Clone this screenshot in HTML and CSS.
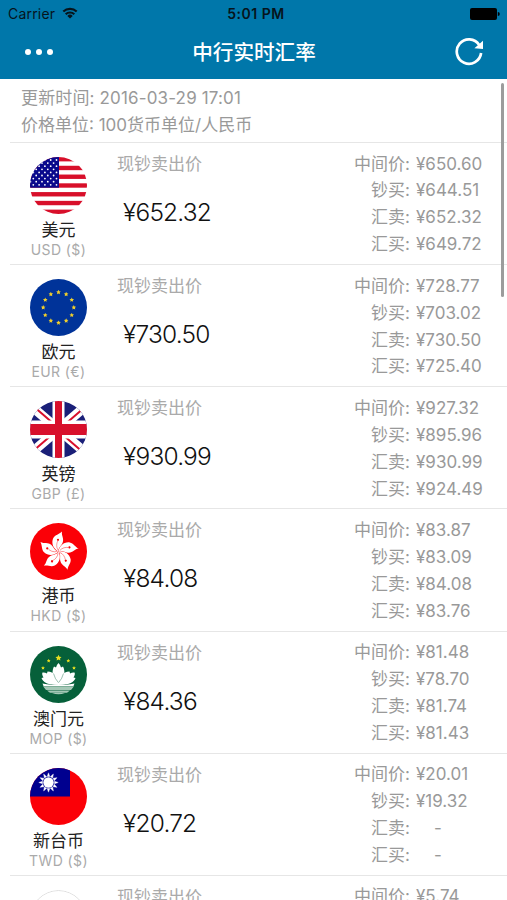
FILE: index.html
```
<!DOCTYPE html>
<html lang="zh-CN">
  <head>
    <meta charset="UTF-8" />
    <title>中行实时汇率</title>
    <link rel="stylesheet" href="styles.css">
  </head>
  <body>
    <div class="header">
      <!-- 状态栏 -->
      <div class="status-bar">
        <div class="carrier">
          Carrier
          <svg class="wifi" viewBox="0 0 16 12">
            <path d="M1.3 4.6a9.6 9.6 0 0 1 13.4 0M3.7 7.2a6.1 6.1 0 0 1 8.6 0" />
            <path class="wifi-dot" d="M8 11.6L5.3 8.9a3.9 3.9 0 0 1 5.4 0z" />
          </svg>
        </div>
        <div class="clock">5:01 PM</div>
        <svg class="battery" viewBox="0 0 30 12">
          <rect width="27" height="12" rx="2" />
          <path d="M27.8 4v4a2 2 0 0 0 0-4z" />
        </svg>
      </div>

      <!-- 导航栏 -->
      <div class="navbar">
        <div class="menu"><i></i><i></i><i></i></div>
        <h1>中行实时汇率</h1>
        <svg class="refresh" viewBox="0 0 28 28">
          <path class="refresh-arc" d="M26.1 15A12.2 12.2 0 1 1 24.2 6.9" />
          <path class="refresh-arrow" d="M28 2.7V11.1L19.4 10.2z" />
        </svg>
      </div>
    </div>

    <div class="scrollbar"></div>

    <div class="info">
      <div class="update-time">更新时间: 2016-03-29 17:01</div>
      <div>价格单位: 100货币单位/人民币</div>
    </div>

    <div class="rate-list"></div>

    <script src="app.js"></script>
  </body>
</html>
```

FILE: styles.css
```
* {
  margin: 0;
  padding: 0;
  box-sizing: border-box;
}

body {
  height: 900px;
  overflow: hidden;
  font-family: Inter, "Noto Sans CJK SC", sans-serif;
  background-color: #fff;
  color: #999;
}

.header {
  height: 79px;
  background-color: #0077aa;
}

/* 状态栏 */
.status-bar {
  display: grid;
  grid-template-columns: 1fr auto 1fr;
  align-items: center;
  height: 27px;
  padding: 0 7px 0 8px;
  color: #06141c;
}

.carrier {
  display: flex;
  align-items: center;
  gap: 7px;
  font-size: 14px;
  letter-spacing: 0.2px;
}

.wifi {
  width: 16px;
  height: 12px;
  margin-top: -2px;
  fill: none;
  stroke: #06141c;
  stroke-width: 2.1;
}

.wifi-dot {
  fill: #06141c;
  stroke: none;
}

.clock {
  padding-left: 4px;
  font-size: 14px;
  font-weight: 600;
  letter-spacing: 0.5px;
}

.battery {
  justify-self: end;
  width: 30px;
  height: 12px;
  fill: #000;
}

/* 导航栏 */
.navbar {
  display: grid;
  grid-template-columns: 1fr auto 1fr;
  align-items: center;
  height: 49px;
  padding: 0 24px 0 25px;
  color: #fff;
}

.menu {
  display: flex;
  gap: 5px;
}

.menu i {
  width: 6px;
  height: 6px;
  border-radius: 50%;
  background-color: #fff;
}

.navbar h1 {
  padding-top: 2px;
  font-size: 20.6px;
  font-weight: 500;
  line-height: 30px;
}

.refresh {
  justify-self: end;
  width: 28px;
  height: 28px;
}

.refresh-arc {
  fill: none;
  stroke: #fff;
  stroke-width: 2.7;
}

.refresh-arrow {
  fill: #fff;
}

.scrollbar {
  position: absolute;
  top: 83px;
  right: 3px;
  width: 3px;
  height: 214px;
  border-radius: 2px;
  background-color: #9c9c9c;
}

.info {
  height: 63px;
  padding: 6px 0 0 21px;
  font-size: 17px;
  line-height: 27px;
}

.update-time {
  letter-spacing: 0.15px;
}

/* 每一行货币 */
.rate {
  display: flex;
  height: 122.15px;
  margin-left: 10px;
  border-top: 1px solid #e6e6e6;
}

.currency {
  width: 97px;
  padding-top: 14px;
  text-align: center;
}

.flag {
  display: block;
  width: 57px;
  height: 57px;
  margin: 0 auto;
  border-radius: 50%;
}

.name {
  margin-top: 4px;
  font-size: 17px;
  line-height: 24px;
  color: #222;
}

.code {
  font-size: 14px;
  line-height: 16px;
  letter-spacing: 0.4px;
  color: #aaa;
}

.sell {
  flex: 1;
  padding: 8px 0 0 10px;
}

.sell-label {
  font-size: 17px;
  line-height: 26px;
  color: #aaa;
}

.sell-price {
  margin-top: 17px;
  padding-left: 6px;
  font-size: 24.5px;
  font-weight: 300;
  line-height: 36px;
  letter-spacing: -0.8px;
  color: #111;
}

.prices {
  display: grid;
  grid-template-columns: auto 74px;
  grid-auto-rows: 26.9px;
  column-gap: 6px;
  align-content: start;
  width: 153px;
  margin-right: 17px;
  padding-top: 7.6px;
  font-size: 17px;
  line-height: 27px;
  white-space: nowrap;
}

.prices dt {
  text-align: right;
}

.prices .empty {
  padding-left: 18px;
}
```

FILE: app.js
```
// 国旗图标
const flags = {
  USD: () => {
    let s = '<rect width="57" height="57" fill="#fff"/>';
    for (let i = 0; i < 13; i += 2) {
      s += `<rect y="${i * 4.385}" width="57" height="4.385" fill="#d80f2a"/>`;
    }
    s += '<rect width="29" height="30.7" fill="#0a0a8c"/>';
    for (let r = 0; r < 9; r++) {
      for (let c = r % 2; c < 11; c += 2) {
        s += `<circle cx="${26.5 - c * 2.9}" cy="${3 + r * 3.1}" r="0.9" fill="#fff"/>`;
      }
    }
    return s;
  },
  EUR: () => {
    let s = '<rect width="57" height="57" fill="#003399"/>';
    for (let i = 0; i < 12; i++) {
      const a = (i * Math.PI) / 6;
      s += star(28.5 + 15.3 * Math.sin(a), 28.5 - 15.3 * Math.cos(a), 2.4, "#f0cf2c");
    }
    return s;
  },
  GBP: () => `
    <rect width="57" height="57" fill="#1a1f78"/>
    <path d="M0 4L57 53M57 4L0 53" stroke="#fff" stroke-width="9.5"/>
    <path d="M6 7.5L28 26.5M51 49.5L29 30.5M51 9.5L29 28.5M6 47.5L28 28.5" stroke="#d8102c" stroke-width="2"/>
    <path d="M28.5 0V57" stroke="#fff" stroke-width="12"/>
    <path d="M0 28.5H57" stroke="#fff" stroke-width="18"/>
    <path d="M0 28.5H57" stroke="#d8102c" stroke-width="10.8"/>
    <path d="M28.5 0V57" stroke="#d8102c" stroke-width="7"/>`,
  HKD: () => {
    let s = '<rect width="57" height="57" fill="#fb0007"/>';
    for (let i = 0; i < 5; i++) {
      s += `<g transform="rotate(${i * 72} 28.5 28.5)">
        <path d="M28.5 28.5C23.5 26 20.8 20.5 23.300 15C25.2 11.500 29 11.500 32 8.400C31.200 12.500 34.400 15.500 32.600 19.700C31.200 23 28 24.500 28.500 28.500z" fill="#fff"/>
        <path d="M28 27C26 24 26.5 20 27.8 18" fill="none" stroke="#fb0007" stroke-width="0.4"/>
        <circle cx="28" cy="16.8" r="1.1" fill="#fb0007"/></g>`;
    }
    return s;
  },
  MOP: () => `
    <rect width="57" height="57" fill="#06603a"/>
    ${star(28.5, 12, 3.2, "#e8e020")}
    ${star(18.7, 14.8, 2, "#e8e020")}${star(38.3, 14.8, 2, "#e8e020")}
    ${star(13, 22, 2, "#e8e020")}${star(44, 22, 2, "#e8e020")}
    <path d="M28.5 38C21 33 22 24 24 20.5L26 21.5Q26.5 19 28.5 17Q30.5 19 31 21.5L33 20.5C35 24 36 33 28.5 38z" fill="#fff"/>
    <path d="M28.5 38.5C20 39.5 13 37 11.5 32L13.5 31.5Q11.5 28 12.5 26.5Q15 26.2 17 27.5L17.5 25.5Q22.5 25.5 25 29H32Q34.5 25.5 39.5 25.5L40 27.5Q42 26.2 44.5 26.5Q45.5 28 43.5 31.5L45.5 32C44 37 37 39.5 28.5 38.5z" fill="#fff"/>
    <path d="M12.5 37.5Q20 39.5 28.5 38Q37 39.5 44.5 37.500L43.500 40H13.500z" fill="#fff"/>
    <path d="M13 40.300H44L41 44H16zM17 44.400H40L37 46.700H20zM22 47.100H35Q28.500 49.500 22 47.100z" fill="#a5c8b6"/>
    <path d="M23.5 27.5Q25 33 28.3 36.5M33.5 27.5Q32 33 28.7 36.5" fill="none" stroke="#06603a" stroke-width="0.4"/>`,
  TWD: () => {
    let s = `<rect width="57" height="57" fill="#fb0007"/>
      <rect width="40" height="28.5" fill="#00008f"/>`;
    for (let i = 0; i < 12; i++) {
      s += `<path d="M17.2 8.5L18.5 4.8L19.8 8.5z" transform="rotate(${i * 30} 18.5 14.5)" fill="#fff" stroke="#fff" stroke-width="0.4"/>`;
    }
    return s + '<circle cx="18.5" cy="14.5" r="5.2" fill="#fff"/>';
  },
  JPY: () => `
    <circle cx="28.5" cy="28.5" r="28" fill="#fff" stroke="#dedede"/>
    <circle cx="28.5" cy="28.5" r="11" fill="#d8102c"/>`,
};

function star(cx, cy, r, color) {
  const points = [];
  for (let i = 0; i < 10; i++) {
    const a = (i * Math.PI) / 5;
    const d = i % 2 ? r * 0.5 : r;
    points.push(`${cx + d * Math.sin(a)},${cy - d * Math.cos(a)}`);
  }
  return `<polygon points="${points.join(" ")}" fill="${color}"/>`;
}

// 现钞卖出价, 中间价, 钞买, 汇卖, 汇买
const rates = [
  ["USD", "美元", "$", "652.32", "650.60", "644.51", "652.32", "649.72"],
  ["EUR", "欧元", "€", "730.50", "728.77", "703.02", "730.50", "725.40"],
  ["GBP", "英镑", "£", "930.99", "927.32", "895.96", "930.99", "924.49"],
  ["HKD", "港币", "$", "84.08", "83.87", "83.09", "84.08", "83.76"],
  ["MOP", "澳门元", "$", "84.36", "81.48", "78.70", "81.74", "81.43"],
  ["TWD", "新台币", "$", "20.72", "20.01", "19.32", "", ""],
  ["JPY", "", "", "", "5.74"],
];

const labels = ["中间价", "钞买", "汇卖", "汇买"];

document.querySelector(".rate-list").innerHTML = rates
  .map(([code, name, symbol, sell, ...prices]) => `
    <div class="rate">
      <div class="currency">
        <svg class="flag" viewBox="0 0 57 57">${flags[code]()}</svg>
        <div class="name">${name}</div>
        <div class="code">${symbol ? `${code} (${symbol})` : ""}</div>
      </div>
      <div class="sell">
        <div class="sell-label">现钞卖出价</div>
        <div class="sell-price">${sell ? "¥" + sell : ""}</div>
      </div>
      <dl class="prices">
        ${prices
          .map((p, i) => `<dt>${labels[i]}:</dt><dd class="${p ? "" : "empty"}">${p ? "¥" + p : "-"}</dd>`)
          .join("")}
      </dl>
    </div>`)
  .join("");
```
